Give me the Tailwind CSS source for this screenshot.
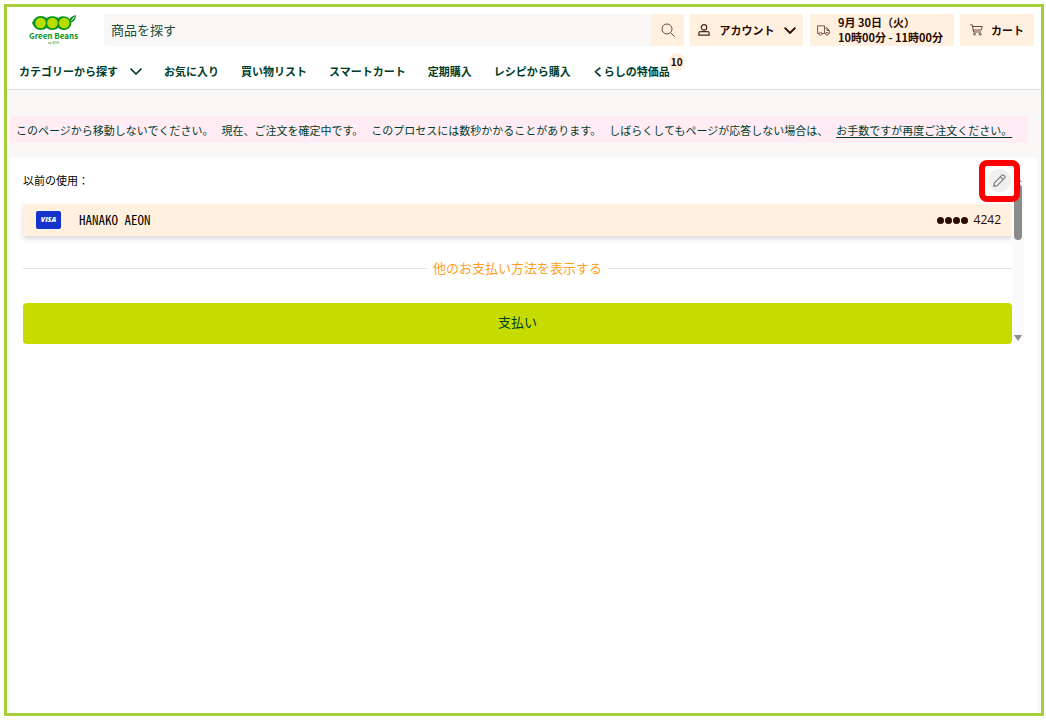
<!DOCTYPE html>
<html lang="ja">
<head>
    <meta charset="UTF-8">
    <meta name="viewport" content="width=device-width, initial-scale=1.0">
    <title>Green Beans - お支払い</title>
    <script src="https://cdn.jsdelivr.net/npm/@tailwindcss/browser@4"></script>
</head>
<body class="bg-white p-1 pr-[2px] min-h-screen flex flex-col font-['Noto_Sans_CJK_JP',sans-serif] text-[11px] text-[#003d29]">

    <div class="flex-1 flex flex-col border-3 border-[#a6ce39] bg-[#f9f8f6]">

        <!-- Header -->
        <header class="bg-white border-b border-[#dcdcdc] h-[83px] pt-[7px]">
            <div class="flex items-center pr-[7px] h-8">
                <a href="#" aria-label="Green Beans" class="ml-[22px] mr-[26px] w-[49px] flex flex-col items-center">
                    <svg class="w-[44px] h-4" viewBox="0 0 44 16">
                        <path d="M0 8C2 4 4 1 8.500 1C11 1 13 1.800 14.500 3C17.500 .5 23 .5 26.300 3C29 .5 35 .5 38 4.500C37.500 2 41 1 44 0C44 4 42 7 39.300 7.200C40 11 36.500 15 32.300 15C30 15 28 14.500 26.300 13C23 15.500 17.500 15.500 14.500 13C13 14.300 11 15 8.500 15C4 15 2 12 0 8Z" fill="#0b9424"/>
                        <circle cx="8.600" cy="8" r="5.300" fill="#b9dc00"/>
                        <circle cx="20.400" cy="8" r="5.300" fill="#b9dc00"/>
                        <circle cx="32.200" cy="8" r="5.300" fill="#b9dc00"/>
                        <path d="M39.500 5.500L42.500 1.800" stroke="#fff" stroke-width="1"/>
                    </svg>
                    <span class="font-bold text-[8px] leading-[10px] text-[#0b9424] whitespace-nowrap">Green Beans</span>
                    <span class="text-[3px] leading-[4px] text-[#0b9424]">by ÆON</span>
                </a>
                <form class="flex flex-1 h-8 rounded-[2px] overflow-hidden bg-[#f9f8f6]">
                    <input type="text" aria-label="商品を探す" placeholder="商品を探す" class="flex-1 min-w-0 px-[7px] text-[13px] placeholder:text-[#1f4d3a] outline-none">
                    <button type="button" aria-label="検索" class="w-[33px] bg-[#fff0df] flex items-center justify-center">
                        <svg class="size-[14px]" viewBox="0 0 14 14" fill="none" stroke="#6b4a3c" stroke-width="1"><circle cx="6" cy="6" r="5"/><path d="M9.700 9.700L13.500 13.500"/></svg>
                    </button>
                </form>
                <button type="button" class="ml-[6px] w-[113px] h-8 rounded-[2px] bg-[#fff0df] text-[#2b0a00] font-bold flex items-center justify-between pl-2 pr-[7px]">
                    <svg class="size-3" viewBox="0 0 12 12" fill="none" stroke="#4a2a1c" stroke-width="1.200"><circle cx="6" cy="3.400" r="2.700"/><path d="M.8 11.200V9.500C.8 8.500 1.500 7.700 2.500 7.700H9.500C10.500 7.700 11.200 8.500 11.200 9.500V11.200Z"/></svg>
                    <span>アカウント</span>
                    <svg class="w-3 h-[7px]" viewBox="0 0 12 7" fill="none" stroke="#2b0a00" stroke-width="1.800"><path d="M.6.6L6 6L11.400.6"/></svg>
                </button>
                <button type="button" class="ml-[7px] w-[144px] h-8 rounded-[2px] bg-[#fff0df] text-[#2b0a00] font-bold flex items-center gap-2 pl-[7px] text-left leading-[15px] whitespace-nowrap">
                    <svg class="w-[13px] h-[11px]" viewBox="0 0 13 11" fill="none" stroke="#7a5a4a" stroke-width="1"><path d="M2 8.500H.6V.8H7.500V8.500H5M7.500 3H10L12.400 5.500V8.500H11.500M8.500 8.500H7.500M10 3V5.500H12.400"/><circle cx="3.500" cy="8.800" r="1.400"/><circle cx="10" cy="8.800" r="1.400"/></svg>
                    <span>9月 30日（火）<br>10時00分 - 11時00分</span>
                </button>
                <button type="button" class="ml-[6px] w-[74px] h-8 rounded-[2px] bg-[#fff0df] text-[#2b0a00] font-bold flex items-center justify-between pl-[10px] pr-[10px]">
                    <svg class="w-[13px] h-3" viewBox="0 0 13 12" fill="none" stroke="#6b4a3c" stroke-width="1"><path d="M.3.8H2.200L3.600 8H11M2.500 2.500H12.300L11.300 6H3.300"/><circle cx="4.500" cy="10.200" r="1"/><circle cx="10.200" cy="10.200" r="1"/></svg>
                    <span>カート</span>
                </button>
            </div>
            <nav class="flex items-center gap-[22px] mt-[17px] pl-3 font-bold whitespace-nowrap">
                <button type="button" class="flex items-center gap-3">
                    カテゴリーから探す
                    <svg class="w-3 h-[7px]" viewBox="0 0 12 7" fill="none" stroke="#003d29" stroke-width="1.600"><path d="M.6.6L6 6L11.400.6"/></svg>
                </button>
                <a href="#">お気に入り</a>
                <a href="#">買い物リスト</a>
                <a href="#">スマートカート</a>
                <a href="#">定期購入</a>
                <a href="#">レシピから購入</a>
                <a href="#" class="relative">くらしの特価品
                    <span class="absolute -top-[10px] -right-4 size-[18px] rounded-full bg-[#fff0df] text-[#2b0a00] text-[10px] leading-[18px] text-center">10</span>
                </a>
            </nav>
        </header>

        <!-- Order in progress notice -->
        <div role="status" class="mt-[26px] ml-[3px] mr-[13px] h-[27px] rounded-[2px] bg-[#ffecf5] pl-[6px] pr-[7px] pt-px flex items-center gap-2 whitespace-nowrap">
            <span>このページから移動しないでください。</span>
            <span>現在、ご注文を確定中です。</span>
            <span>このプロセスには数秒かかることがあります。</span>
            <span>しばらくしてもページが応答しない場合は、</span>
            <a href="#" class="underline underline-offset-2">お手数ですが再度ご注文ください。</a>
        </div>

        <!-- Payment panel -->
        <main class="flex-1 mt-[14px] ml-[3px] mr-1 rounded-t-[3px] bg-white">
            <div class="flex ml-[13px] mr-[13px]">
                <section class="flex-1">
                    <div class="flex items-center justify-between h-[47px]">
                        <h1 class="text-black">以前の使用：</h1>
                        <div class="relative w-[33px] h-[42px]">
                            <button type="button" aria-label="編集" class="absolute top-0 left-0 z-10 w-[41px] h-[42px] rounded-[8px] border-6 border-[#ff0000] bg-white flex items-center justify-center">
                                <span class="size-[23px] rounded-full bg-[#f0f0f0] flex items-center justify-center">
                                    <svg class="size-[13px]" viewBox="0 0 13 13" fill="none" stroke="#7d7d7d" stroke-width="1.200" stroke-linejoin="round"><path d="M.8 12.200L1.400 8.900L8.600 1.600Q9.900.3 11.300 1.700Q12.700 3.100 11.400 4.400L4.200 11.600ZM7.400 2.900L10.100 5.600"/></svg>
                                </span>
                            </button>
                        </div>
                    </div>
                    <div class="flex items-center h-8 bg-[#fff0df] shadow-[0_3px_5px_rgba(0,0,0,0.15)] pl-[13px] pr-[11px] text-[12px]">
                        <span class="w-[25px] h-[18px] rounded-[2px] bg-[#1434cb] text-white font-['Open_Sans',sans-serif] font-extrabold italic text-[7px] leading-[18px] text-center">VISA</span>
                        <span class="ml-[18px] font-['Noto_Sans_Mono_CJK_JP','Liberation_Mono',monospace] text-[13px] text-black">HANAKO AEON</span>
                        <span class="ml-auto flex gap-px">
                            <i class="size-[7px] rounded-full bg-[#2b0a00]"></i>
                            <i class="size-[7px] rounded-full bg-[#2b0a00]"></i>
                            <i class="size-[7px] rounded-full bg-[#2b0a00]"></i>
                            <i class="size-[7px] rounded-full bg-[#2b0a00]"></i>
                        </span>
                        <span class="ml-[6px] font-['Open_Sans',sans-serif] text-[#2b0a00]">4242</span>
                    </div>
                    <div class="flex items-center mt-[22px] gap-[6px] h-5">
                        <span class="flex-1 h-px bg-[#e3e3e3]"></span>
                        <button type="button" class="text-[13px] text-[#ff9f1c]">他のお支払い方法を表示する</button>
                        <span class="flex-1 h-px bg-[#e3e3e3]"></span>
                    </div>
                    <button type="submit" class="mt-[25px] w-full h-[41px] pb-[3px] rounded-[4px] bg-[#c6db00] text-[13px] text-[#003d29]">支払い</button>
                </section>
                <!-- Scrollbar -->
                <div aria-hidden="true" class="w-[12px] mt-[20px] bg-[#fafafa] flex flex-col items-center">
                    <svg class="w-2 h-[6px]" viewBox="0 0 8 6" fill="#8b8b8b"><path d="M0 5H8L4 0Z"/></svg>
                    <span class="mt-px w-2 h-[56px] rounded-full bg-[#8b8b8b]"></span>
                    <svg class="w-2 h-[6px] mt-auto mb-[3px]" viewBox="0 0 8 6" fill="#8b8b8b"><path d="M0 0H8L4 6Z"/></svg>
                </div>
            </div>
        </main>
    </div>

</body>
</html>
